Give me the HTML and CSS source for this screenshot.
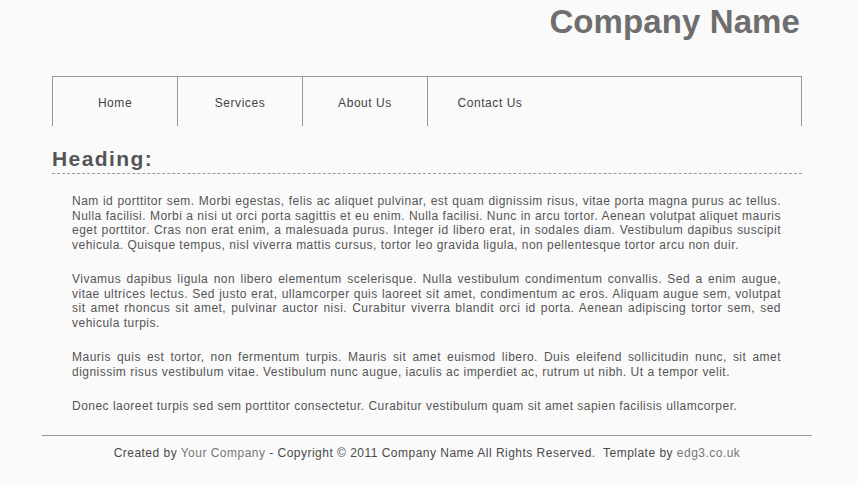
FILE: index.html
```html
<!DOCTYPE html>
<html lang="en">
<head>
<meta charset="utf-8">
<title>Company Name</title>
<link rel="stylesheet" href="styles.css">
</head>
<body>
<div class="page">
  <div class="inner">
    <header class="header">
      <h1 class="logo">Company Name</h1>
    </header>
    <nav class="nav">
      <ul class="menu">
        <li class="menu-item"><a href="#">Home</a></li>
        <li class="menu-item"><a href="#">Services</a></li>
        <li class="menu-item"><a href="#">About Us</a></li>
        <li class="menu-item last"><a href="#">Contact Us</a></li>
      </ul>
    </nav>
    <main class="content">
      <h2 class="heading">Heading:</h2>
      <div class="text">
        <p>Nam id porttitor sem. Morbi egestas, felis ac aliquet pulvinar, est quam dignissim risus, vitae porta magna purus ac tellus. Nulla facilisi. Morbi a nisi ut orci porta sagittis et eu enim. Nulla facilisi. Nunc in arcu tortor. Aenean volutpat aliquet mauris eget porttitor. Cras non erat enim, a malesuada purus. Integer id libero erat, in sodales diam. Vestibulum dapibus suscipit vehicula. Quisque tempus, nisl viverra mattis cursus, tortor leo gravida ligula, non pellentesque tortor arcu non duir.</p>
        <p>Vivamus dapibus ligula non libero elementum scelerisque. Nulla vestibulum condimentum convallis. Sed a enim augue, vitae ultrices lectus. Sed justo erat, ullamcorper quis laoreet sit amet, condimentum ac eros. Aliquam augue sem, volutpat sit amet rhoncus sit amet, pulvinar auctor nisi. Curabitur viverra blandit orci id porta. Aenean adipiscing tortor sem, sed vehicula turpis.</p>
        <p>Mauris quis est tortor, non fermentum turpis. Mauris sit amet euismod libero. Duis eleifend sollicitudin nunc, sit amet dignissim risus vestibulum vitae. Vestibulum nunc augue, iaculis ac imperdiet ac, rutrum ut nibh. Ut a tempor velit.</p>
        <p>Donec laoreet turpis sed sem porttitor consectetur. Curabitur vestibulum quam sit amet sapien facilisis ullamcorper.</p>
      </div>
    </main>
  </div>
  <footer class="footer">
    <p class="footer-text">Created by <a href="#" class="footer-link">Your Company</a> - Copyright &copy; 2011 Company Name All Rights Reserved.&nbsp; Template by <a href="#" class="footer-link">edg3.co.uk</a></p>
  </footer>
</div>
</body>
</html>
```
FILE: styles.css
```css
html, body {
  margin: 0;
  padding: 0;
  background: #fafafa;
}
body {
  font-family: "Liberation Sans", Arial, Helvetica, sans-serif;
  font-size: 12px;
  color: #555;
  padding-right: 3px;
}
.page {
  width: 770px;
  margin: 0 auto;
}
.inner {
  width: 750px;
  margin: 0 auto;
}
.header {
  display: flex;
  justify-content: flex-end;
  padding-top: 2px;
}
.logo {
  margin: 0 2px 0 0;
  font-size: 33px;
  line-height: 40px;
  font-weight: bold;
  color: #6e6e6e;
  letter-spacing: 0.1px;
}
.nav {
  margin-top: 34px;
}
.menu {
  list-style: none;
  margin: 0;
  padding: 0;
  display: flex;
  border: 1px solid #999;
  border-bottom: none;
}
.menu-item {
  width: 124px;
  height: 46px;
  padding-top: 3px;
  line-height: 46px;
  text-align: center;
  border-right: 1px solid #999;
}
.menu-item.last {
  border-right: none;
}
.menu-item a {
  color: #444;
  text-decoration: none;
  letter-spacing: 0.55px;
}
.content {
  padding-top: 21px;
}
.heading {
  margin: 0;
  font-size: 21px;
  line-height: 24px;
  font-weight: bold;
  color: #555;
  padding-bottom: 2px;
  border-bottom: 1px dashed #999;
  letter-spacing: 1.4px;
}
.text {
  padding: 20px 21px 0 20px;
}
.text p {
  margin: 0 0 20px;
  line-height: 14.5px;
  text-align: justify;
  letter-spacing: 0.48px;
}
.text p:last-child {
  margin-bottom: 0;
}
.footer {
  margin-top: 21px;
  border-top: 1px solid #999;
  padding-top: 10px;
}
.footer-text {
  margin: 0;
  text-align: center;
  line-height: 14.5px;
  color: #4a4a4a;
  letter-spacing: 0.48px;
}
.footer-link {
  color: #777;
  text-decoration: none;
}
```
